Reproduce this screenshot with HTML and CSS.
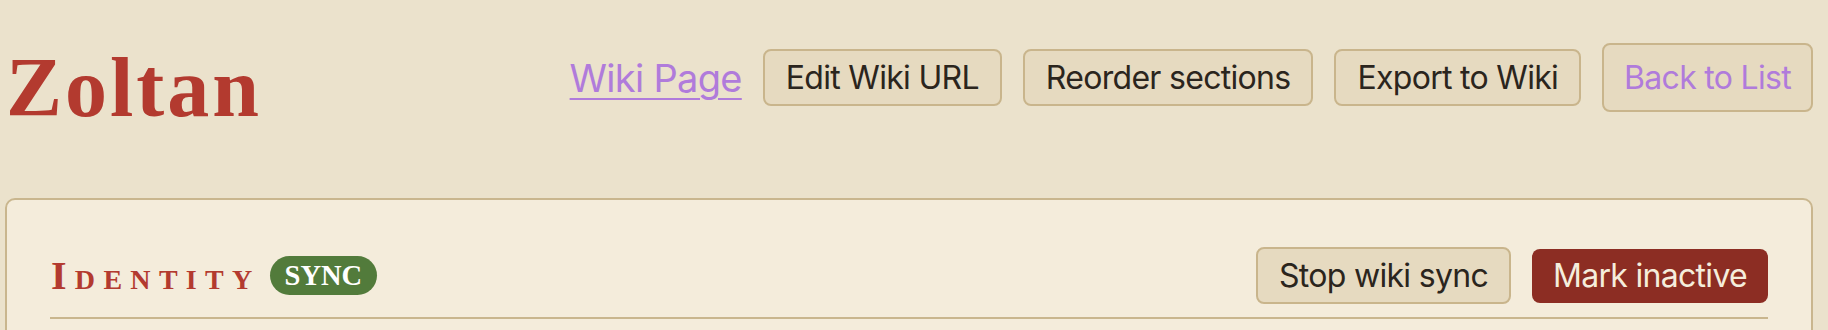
FILE: index.html
```html
<!DOCTYPE html>
<html lang="en">
<head>
    <meta charset="UTF-8">
    <meta name="viewport" content="width=device-width, initial-scale=1.0">
    <title>Zoltan</title>
    <link rel="stylesheet" href="styles.css">
</head>
<body>
    <header class="page-header">
        <h1 class="page-title">Zoltan</h1>
        <nav class="page-actions">
            <a class="wiki-link" href="#">Wiki Page</a>
            <button class="btn">Edit Wiki URL</button>
            <button class="btn">Reorder sections</button>
            <button class="btn">Export to Wiki</button>
            <a class="btn btn-back" href="#">Back to List</a>
        </nav>
    </header>

    <section class="card">
        <div class="card-head">
            <h2 class="section-title">Identity <span class="badge">sync</span></h2>
            <div class="card-actions">
                <button class="btn">Stop wiki sync</button>
                <button class="btn btn-danger">Mark inactive</button>
            </div>
        </div>
    </section>
</body>
</html>
```

FILE: styles.css
```css
* {
    margin: 0;
    padding: 0;
    box-sizing: border-box;
}

body {
    font-family: Inter, 'Noto Sans', sans-serif;
    background: #ebe2cc;
    color: #2b251d;
    padding: 0 15px 0 5px;
}

.page-header {
    display: flex;
    justify-content: space-between;
    align-items: center;
    height: 155px;
}

.page-title {
    font-family: 'Liberation Serif', serif;
    font-size: 84px;
    font-weight: 700;
    line-height: 1;
    letter-spacing: 3px;
    color: #b33a2f;
    margin-top: 20px;
    margin-left: 1px;
}

.page-actions {
    display: flex;
    align-items: center;
    gap: 21px;
}

.wiki-link {
    font-size: 38px;
    letter-spacing: -0.7px;
    color: #b07bdb;
    text-decoration: underline;
    text-decoration-thickness: 2px;
    text-underline-offset: 6px;
}

.btn {
    display: inline-block;
    font-family: inherit;
    font-size: 32px;
    line-height: 37px;
    letter-spacing: -0.7px;
    color: #2b251d;
    background: #e6dac0;
    border: 2px solid #c9b58c;
    border-radius: 8px;
    padding: 8px 21px;
    text-decoration: none;
    cursor: pointer;
}

.btn-back {
    color: #b07bdb;
    padding: 14px 20px;
}

.btn-danger {
    background: #8c2d23;
    border: none;
    color: #f5eddc;
    padding: 8.5px 21px;
}

.card {
    margin-top: 43px;
    background: #f4ecdb;
    border: 2px solid #c9b68e;
    border-radius: 10px;
    padding: 47px 43px 0 43px;
    min-height: 240px;
}

.card-head {
    display: flex;
    justify-content: space-between;
    align-items: center;
    padding-bottom: 13px;
    border-bottom: 2px solid #c9b68e;
}

.section-title {
    font-family: 'Liberation Serif', serif;
    font-size: 40px;
    font-weight: 700;
    font-variant: small-caps;
    letter-spacing: 8.3px;
    color: #b33a2f;
    display: flex;
    align-items: center;
    line-height: 1;
    margin-left: 1px;
}

.badge {
    font-size: 28.5px;
    font-weight: 700;
    font-variant: normal;
    text-transform: uppercase;
    letter-spacing: 0;
    line-height: 29px;
    color: #fff;
    background: #527b3b;
    border-radius: 20px;
    padding: 5px 15px;
    margin-left: 9px;
}

.card-actions {
    display: flex;
    align-items: center;
    gap: 21px;
}
```
